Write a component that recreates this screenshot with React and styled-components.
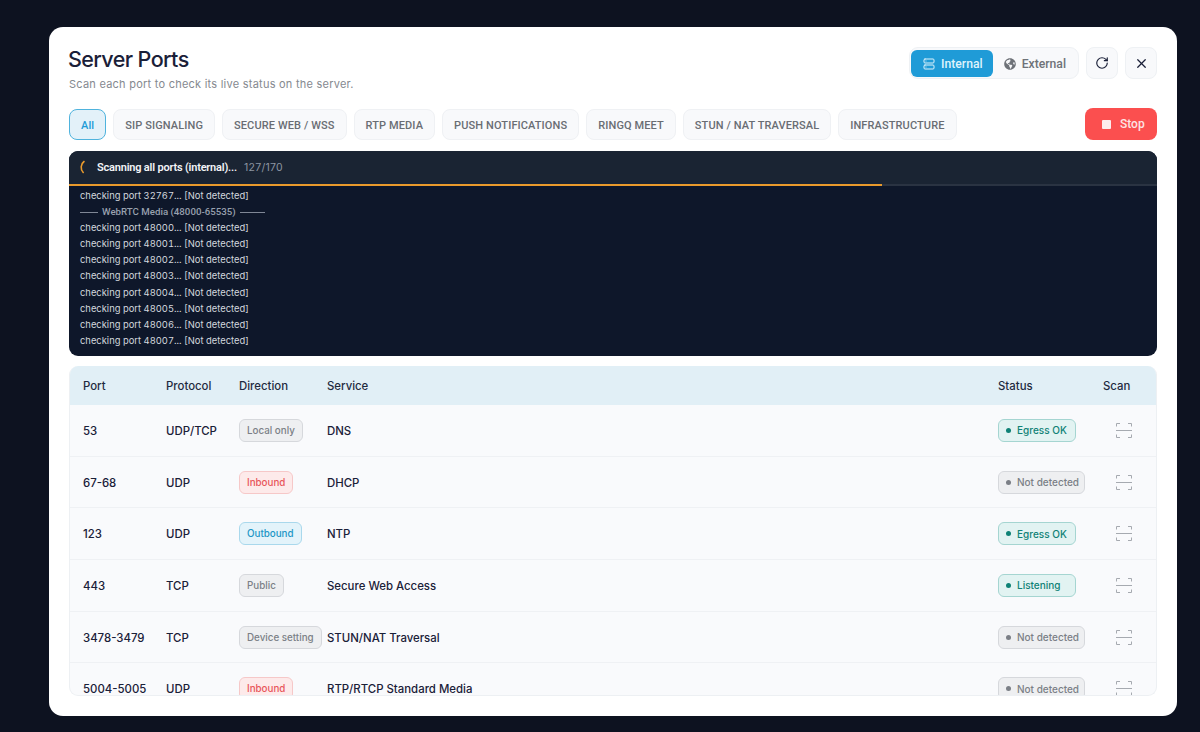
import React from 'react';
import styled, { createGlobalStyle } from 'styled-components';
import { Server, RotateCw, X } from 'lucide-react';
import { FaGlobeAmericas } from 'react-icons/fa';

const Global = createGlobalStyle`
  html, body { margin: 0; padding: 0; height: 100%; background: #0d1220; overflow: hidden; }
  #root { height: 100%; }
  * { box-sizing: border-box; }
`;

const Backdrop = styled.div`
  height: 732px;
  padding: 27px 23px 16px 49px;
  background: #0d1220;
  font-family: Inter, "Liberation Sans", sans-serif;
`;
const Modal = styled.div`
  height: 100%;
  background: #fff;
  border-radius: 14px;
  padding: 20px;
  display: flex;
  flex-direction: column;
`;
const Header = styled.div`
  display: flex;
  justify-content: space-between;
  align-items: flex-start;
  height: 61px;
`;
const Title = styled.h1`
  margin: 0 0 0 -1px;
  font-size: 21.5px;
  line-height: 25px;
  font-weight: 500;
  letter-spacing: -0.6px;
  color: #1a2038;
`;
const Subtitle = styled.p`
  margin: 5px 0 0;
  font-size: 11px;
  line-height: 15px;
  letter-spacing: 0.24px;
  color: #85898f;
`;
const Controls = styled.div`
  display: flex;
  gap: 7px;
  align-items: center;
  font-family: Roboto, sans-serif;
`;
const Segment = styled.div`
  display: flex;
  align-items: center;
  height: 32px;
  padding: 2px 0 2px 1px;
  border: 1px solid #eef1f4;
  border-radius: 9px;
  background: #f8f9fb;
`;
const SegmentButton = styled.div`
  display: flex;
  align-items: center;
  gap: 6px;
  height: 27px;
  padding: ${p => (p.$active ? '1px 10px 0 12px' : '1px 12px 0 11px')};
  border-radius: 6px;
  font-size: 12.2px;
  font-weight: 500;
  background: ${p => (p.$active ? '#1f9bd7' : 'transparent')};
  color: ${p => (p.$active ? '#dff3fc' : '#6e7278')};
`;
const IconButton = styled.div`
  width: 32px;
  height: 32px;
  display: flex;
  align-items: center;
  justify-content: center;
  border: 1px solid #eef1f4;
  border-radius: 8px;
  background: #f8f9fb;
  color: #1a2038;
`;
const TabBar = styled.div`
  display: flex;
  align-items: flex-end;
  gap: 7px;
  height: 32px;
  font-family: Roboto, sans-serif;
`;
const Tab = styled.div`
  height: 31px;
  display: flex;
  align-items: center;
  padding: 1px 11px 0;
  border-radius: 8px;
  font-size: 11px;
  font-weight: 500;
  letter-spacing: 0.11px;
  border: 1px solid ${p => (p.$active ? '#4fb3dd' : '#eff1f4')};
  background: ${p => (p.$active ? '#e3f1f9' : '#f8f9fb')};
  color: ${p => (p.$active ? '#1f9bd7' : '#696d73')};
`;
const StopButton = styled.div`
  margin-left: auto;
  width: 72px;
  height: 32px;
  display: flex;
  align-items: center;
  gap: 9px;
  padding-left: 17px;
  border-radius: 8px;
  background: #fb4f4f;
  color: #fde3e3;
  font-size: 12px;
  font-weight: 500;
`;
const StopSquare = styled.span`
  width: 9px;
  height: 9px;
  border-radius: 1px;
  background: #fdecec;
`;
const LogPanel = styled.div`
  margin-top: 11px;
  height: 205px;
  flex: none;
  background: #0e172a;
  border-radius: 9px;
  overflow: hidden;
  display: flex;
  flex-direction: column;
`;
const LogHeader = styled.div`
  height: 33px;
  flex: none;
  padding: 0 0 1px 8px;
  display: flex;
  align-items: center;
  background: #1a2433;
`;
const ScanTitle = styled.span`
  margin-left: 8px;
  font-family: Roboto, sans-serif;
  font-size: 11px;
  font-weight: 600;
  letter-spacing: -0.2px;
  color: #f2f4f7;
`;
const ScanCount = styled.span`
  margin-left: 7px;
  font-size: 10.5px;
  letter-spacing: 0.3px;
  color: #8c94a1;
`;
const ProgressTrack = styled.div`
  height: 2px;
  flex: none;
  background: #2a3342;
`;
const ProgressFill = styled.div`
  height: 100%;
  background: #e99a2c;
`;
const LogBody = styled.div`
  padding: 2px 11px 5px;
  font-size: 9.4px;
  line-height: 16.1px;
  font-variant-numeric: tabular-nums;
  color: #d3d7de;
`;
const LogDivider = styled.div`
  display: flex;
  align-items: center;
  gap: 4px;
  color: #98a0ae;
  font-family: Roboto, sans-serif;
  font-size: 9.7px;
  font-weight: 500;
`;
const DividerRule = styled.span`
  width: ${p => p.$w};
  height: 1px;
  background: #7f8796;
`;
const TableWrap = styled.div`
  margin-top: 10px;
  flex: 1;
  min-height: 0;
  overflow: hidden;
  border: 1px solid #edf0f3;
  border-top: 0;
  border-radius: 9px;
  background: #f9fafc;
`;
const Row = styled.div`
  display: grid;
  grid-template-columns: 83px 73px 88px 1fr 105px 53px;
  padding-left: 13px;
  align-items: center;
  height: ${p => (p.$head ? '39px' : '51.7px')};
  background: ${p => (p.$head ? '#e1eff6' : 'transparent')};
  border-bottom: ${p => (p.$head ? '0' : '1px solid #eff1f4')};
  font-size: 11.4px;
  font-weight: 500;
  color: ${p => (p.$head ? '#1f2a3f' : '#1a2038')};
`;
const Cell = styled.div`
  padding-top: ${p => (p.$head ? '0' : '1px')};
`;
const ScanCell = styled.div`
  display: flex;
  justify-content: ${p => (p.$head ? 'flex-start' : 'center')};
  color: ${p => (p.$head ? '#1f2a3f' : '#a6aab0')};
  padding-right: ${p => (p.$head ? '0' : '12px')};
`;
const palette = {
  gray: ['#eeeff1', '#d6d8dc', '#7b7f86'],
  red: ['#fdeaea', '#f6c8c8', '#e8565a'],
  blue: ['#e3f3fa', '#a9d8ec', '#2196c6'],
  green: ['#e2f3f2', '#a5d5d1', '#0f8276'],
};
const Pill = styled.span`
  display: inline-flex;
  align-items: center;
  gap: 6px;
  height: 23px;
  padding: ${p => (p.$status ? '0 6px 0 7px' : '0 7px')};
  width: ${p => p.$w || 'auto'};
  justify-self: start;
  border-radius: 6px;
  font-size: ${p => (p.$status ? '10px' : '9.8px')};
  font-weight: 500;
  white-space: nowrap;
  background: ${p => palette[p.$c][0]};
  border: 1px solid ${p => palette[p.$c][1]};
  color: ${p => palette[p.$c][2]};
`;
const Dot = styled.span`
  flex: none;
  width: 5px;
  height: 5px;
  border-radius: 50%;
  background: currentColor;
`;

const Spinner = () => (
  <svg width="12" height="14" viewBox="0 0 12 14" fill="none">
    <path d="M7 1.5C3.6 4 3.2 9.4 6.2 12.5" stroke="#e99a2c" strokeWidth="1.6" strokeLinecap="round" />
  </svg>
);
const ScanIcon = () => (
  <svg width="16" height="15" viewBox="0 0 16 15" fill="none" stroke="currentColor" strokeWidth="1">
    <path d="M.5 3.5V.5H4M12 .5h3.5v3M.5 11.5v3H4M12 14.5h3.5v-3M0 7.5h16" />
  </svg>
);

const tabs = ['SIP SIGNALING', 'SECURE WEB / WSS', 'RTP MEDIA', 'PUSH NOTIFICATIONS', 'RINGQ MEET', 'STUN / NAT TRAVERSAL', 'INFRASTRUCTURE'];
const ports = [48000, 48001, 48002, 48003, 48004, 48005, 48006, 48007];
const rows = [
  ['53', 'UDP/TCP', 'Local only', 'gray', 'DNS', 'Egress OK', 'green', '78px'],
  ['67-68', 'UDP', 'Inbound', 'red', 'DHCP', 'Not detected', 'gray', '87px'],
  ['123', 'UDP', 'Outbound', 'blue', 'NTP', 'Egress OK', 'green', '78px'],
  ['443', 'TCP', 'Public', 'gray', 'Secure Web Access', 'Listening', 'green', '78px'],
  ['3478-3479', 'TCP', 'Device setting', 'gray', 'STUN/NAT Traversal', 'Not detected', 'gray', '87px'],
  ['5004-5005', 'UDP', 'Inbound', 'red', 'RTP/RTCP Standard Media', 'Not detected', 'gray', '87px'],
];

export default function App() {
  return (
    <Backdrop>
      <Global />
      <Modal>
        <Header>
          <div>
            <Title>Server Ports</Title>
            <Subtitle>Scan each port to check its live status on the server.</Subtitle>
          </div>
          <Controls>
            <Segment>
              <SegmentButton $active><Server size={12} />Internal</SegmentButton>
              <SegmentButton><FaGlobeAmericas size={12} />External</SegmentButton>
            </Segment>
            <IconButton><RotateCw size={14} /></IconButton>
            <IconButton><X size={15} /></IconButton>
          </Controls>
        </Header>
        <TabBar>
          <Tab $active>All</Tab>
          {tabs.map(t => <Tab key={t}>{t}</Tab>)}
          <StopButton><StopSquare />Stop</StopButton>
        </TabBar>
        <LogPanel>
          <LogHeader>
            <Spinner />
            <ScanTitle>Scanning all ports (internal)...</ScanTitle>
            <ScanCount>127/170</ScanCount>
          </LogHeader>
          <ProgressTrack><ProgressFill style={{ width: `${(127 / 170) * 100}%` }} /></ProgressTrack>
          <LogBody>
            <div>checking port 32767... [Not detected]</div>
            <LogDivider><DividerRule $w="18px" />WebRTC Media (48000-65535)<DividerRule $w="25px" /></LogDivider>
            {ports.map(p => <div key={p}>checking port {p}... [Not detected]</div>)}
          </LogBody>
        </LogPanel>
        <TableWrap>
          <Row $head>
            <Cell $head>Port</Cell><Cell $head>Protocol</Cell><Cell $head>Direction</Cell><Cell $head>Service</Cell><Cell $head>Status</Cell>
            <ScanCell $head>Scan</ScanCell>
          </Row>
          {rows.map(r => (
            <Row key={r[0]}>
              <Cell>{r[0]}</Cell>
              <Cell>{r[1]}</Cell>
              <Pill $c={r[3]}>{r[2]}</Pill>
              <Cell>{r[4]}</Cell>
              <Pill $status $c={r[6]} $w={r[7]}><Dot />{r[5]}</Pill>
              <ScanCell><ScanIcon /></ScanCell>
            </Row>
          ))}
        </TableWrap>
      </Modal>
    </Backdrop>
  );
}
